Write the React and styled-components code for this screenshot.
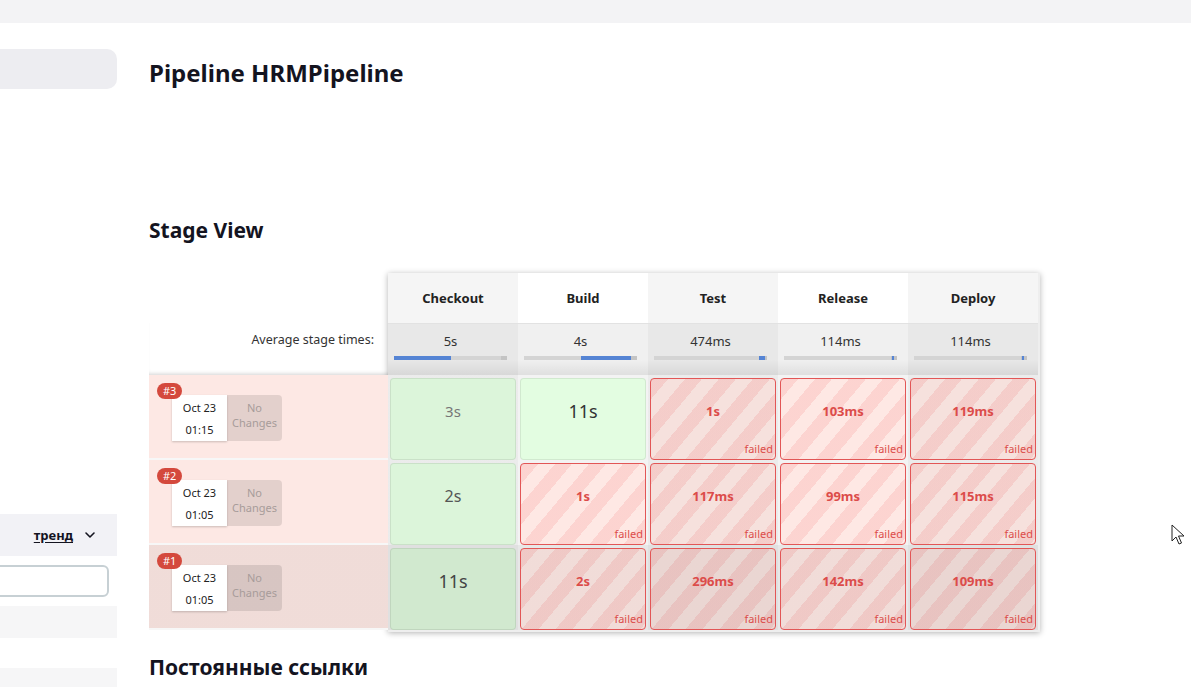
import React from "react";
import styled, { createGlobalStyle } from "styled-components";

const GlobalStyle = createGlobalStyle`
  html, body {
    margin: 0;
    padding: 0;
    background: #fff;
  }
  body {
    font-family: "Noto Sans", "Open Sans", sans-serif;
    color: #14141f;
    overflow: hidden;
  }
`;

// stage durations: header averages and per-build results
const stages = [
    {name: "Checkout", avg: "5s", from: 0, width: 50},
    {name: "Build", avg: "4s", from: 50, width: 45},
    {name: "Test", avg: "474ms", from: 93, width: 5},
    {name: "Release", avg: "114ms", from: 96, width: 1},
    {name: "Deploy", avg: "114ms", from: 96, width: 1},
];

const builds = [
    {
        id: 3, date: "Oct 23", time: "01:15", shade: 0,
        cells: [
            {ok: true, text: "3s", size: 15, color: "#777"},
            {ok: true, text: "11s", size: 18, color: "#333"},
            {text: "1s"}, {text: "103ms"}, {text: "119ms"},
        ],
    },
    {
        id: 2, date: "Oct 23", time: "01:05", shade: 0,
        cells: [
            {ok: true, text: "2s", size: 16, color: "#555"},
            {text: "1s"}, {text: "117ms"}, {text: "99ms"}, {text: "115ms"},
        ],
    },
    {
        id: 1, date: "Oct 23", time: "01:05", shade: 0.05,
        cells: [
            {ok: true, text: "11s", size: 18, color: "#444"},
            {text: "2s"}, {text: "296ms"}, {text: "142ms"}, {text: "109ms"},
        ],
    },
];

const App = () => {
    return (
        <Page>
            <GlobalStyle/>
            <TopBar/>
            <Body>
                <Sidebar>
                    <SidePill/>
                    <TrendBar>
                        <TrendLink>тренд</TrendLink>
                        <svg width="12" height="12" viewBox="0 0 12 12" fill="none">
                            <path d="M2 4l4 4 4-4" stroke="#14141f" strokeWidth="1.6" strokeLinecap="round" strokeLinejoin="round"/>
                        </svg>
                    </TrendBar>
                    <SideInput/>
                    <SideRow $mt={9} $h={32}/>
                    <SideRow $mt={30} $h={40}/>
                </Sidebar>

                <Main>
                    <Title>Pipeline HRMPipeline</Title>
                    <SubTitle $mt={127}>Stage View</SubTitle>

                    <StageView>
                        <LeftCol>
                            <LeftHead/>
                            <AvgLabel>Average stage times:</AvgLabel>
                            {builds.map((b) => (
                                <BuildRow key={b.id} $shade={b.shade}>
                                    <Badge>#{b.id}</Badge>
                                    <BuildBox>
                                        <DateBox>
                                            <span>{b.date}</span>
                                            <span>{b.time}</span>
                                        </DateBox>
                                        <ChangesBox>No<br/>Changes</ChangesBox>
                                    </BuildBox>
                                </BuildRow>
                            ))}
                        </LeftCol>

                        <StageTable>
                            {stages.map((s, i) => (
                                <HeadCell key={s.name} $odd={i % 2 === 0}>{s.name}</HeadCell>
                            ))}
                            {stages.map((s, i) => (
                                <AvgCell key={s.name} $odd={i % 2 === 0}>
                                    <span>{s.avg}</span>
                                    <Bar>
                                        <BarFill style={{left: `${s.from}%`, width: `${s.width}%`}}/>
                                    </Bar>
                                </AvgCell>
                            ))}
                            {builds.map((b) =>
                                b.cells.map((c, i) => (
                                    <CellWrap key={`${b.id}-${i}`} $odd={i % 2 === 0} $shade={b.shade}>
                                        {c.ok ? (
                                            <OkBox $odd={i % 2 === 0} $shade={b.shade}>
                                                <OkText $size={c.size} $color={c.color}>{c.text}</OkText>
                                            </OkBox>
                                        ) : (
                                            <FailBox $odd={i % 2 === 0} $shade={b.shade}>
                                                <FailText>{c.text}</FailText>
                                                <FailTag>failed</FailTag>
                                            </FailBox>
                                        )}
                                    </CellWrap>
                                ))
                            )}
                        </StageTable>
                    </StageView>

                    <SubTitle $mt={21}>Постоянные ссылки</SubTitle>
                </Main>
            </Body>

            <Cursor width="14" height="22" viewBox="0 0 14 22">
                <path d="M1 1v16l4-4 3 7 2.5-1-3-7h5.5z" fill="#fff" stroke="#222" strokeWidth="1"/>
            </Cursor>
        </Page>
    );
};

export default App;

const Page = styled.div`
    position: relative;
    width: 1191px;
    height: 687px;
    overflow: hidden;
`;

const TopBar = styled.div`
    height: 23px;
    background: #f3f3f5;
`;

const Body = styled.div`
    display: flex;
`;

const Sidebar = styled.aside`
    width: 117px;
    flex-shrink: 0;
    display: flex;
    flex-direction: column;
    padding-top: 26px;
    overflow: hidden;
`;

const SidePill = styled.div`
    height: 40px;
    margin-left: -20px;
    width: 137px;
    border-radius: 10px;
    background: #ededf1;
`;

const TrendBar = styled.div`
    margin-top: 425px;
    height: 42px;
    background: #f2f2f6;
    display: flex;
    align-items: center;
    justify-content: flex-end;
    gap: 10px;
    padding-right: 21px;
`;

const TrendLink = styled.span`
    font-size: 13px;
    font-weight: 700;
    text-decoration: underline;
    text-underline-offset: 2px;
    color: #14141f;
    margin-right: 1px;
`;

const SideInput = styled.div`
    margin-top: 9px;
    margin-left: -12px;
    width: 121px;
    height: 32px;
    box-sizing: border-box;
    border: 2px solid #c7d0d4;
    border-radius: 6px;
    background: #fff;
`;

const SideRow = styled.div`
    margin-top: ${(p) => p.$mt}px;
    height: ${(p) => p.$h}px;
    background: #f6f6f7;
`;

const Main = styled.main`
    flex: 1;
    padding-left: 32px;
`;

const Title = styled.h1`
    margin: 34px 0 0 0;
    font-size: 24px;
    line-height: 32px;
    font-weight: 700;
    color: #14141f;
`;

const SubTitle = styled.h2`
    margin: ${(p) => p.$mt}px 0 0 0;
    font-size: 21px;
    line-height: 28px;
    font-weight: 700;
    color: #14141f;
`;

const StageView = styled.div`
    display: flex;
    margin-top: 29px;
    font-family: "Noto Sans", "Open Sans", sans-serif;
`;

const LeftCol = styled.div`
    width: 239px;
    display: flex;
    flex-direction: column;
`;

const LeftHead = styled.div`
    height: 50px;
`;

const AvgLabel = styled.div`
    height: 52px;
    box-sizing: border-box;
    padding: 8px 14px 0 0;
    text-align: right;
    font-size: 12.5px;
    color: #333;
    box-shadow: inset 0 -4px 4px -3px rgba(0, 0, 0, 0.18);
`;

const BuildRow = styled.div`
    position: relative;
    height: 85px;
    box-sizing: border-box;
    border-bottom: 2px solid #f7f7f7;
    background: linear-gradient(rgba(0, 0, 0, ${(p) => p.$shade}), rgba(0, 0, 0, ${(p) => p.$shade})), #fde8e4;
`;

const Badge = styled.span`
    position: absolute;
    left: 8px;
    top: 8px;
    z-index: 1;
    padding: 0 6px;
    height: 16px;
    line-height: 16px;
    border-radius: 8px;
    background: #d4493d;
    color: #fff;
    font-size: 11px;
`;

const BuildBox = styled.div`
    display: flex;
    margin: 20px 0 0 23px;
    width: 110px;
    height: 46px;
`;

const DateBox = styled.div`
    width: 55px;
    display: flex;
    flex-direction: column;
    justify-content: space-between;
    align-items: center;
    background: #fff;
    box-shadow: 0 1px 2px rgba(0, 0, 0, 0.2);
    font-size: 11px;
    line-height: 14px;
    color: #222;
    padding: 6px 0 4px;
    box-sizing: border-box;
`;

const ChangesBox = styled.div`
    width: 55px;
    display: flex;
    align-items: center;
    justify-content: center;
    text-align: center;
    font-size: 11px;
    line-height: 15px;
    padding-bottom: 6px;
    box-sizing: border-box;
    color: #a79c9a;
    background: rgba(0, 0, 0, 0.1);
    border-radius: 0 4px 4px 0;
`;

const StageTable = styled.div`
    display: grid;
    grid-template-columns: repeat(5, 130px);
    grid-template-rows: 50px 52px repeat(3, 85px);
    padding-right: 2px;
    padding-bottom: 2px;
    background: #eee;
    box-shadow: 0 1px 6px rgba(0, 0, 0, 0.3);
`;

const HeadCell = styled.div`
    display: flex;
    align-items: center;
    justify-content: center;
    font-size: 13px;
    font-weight: 700;
    color: #222;
    background: ${(p) => (p.$odd ? "#f5f5f5" : "#fff")};
`;

const AvgCell = styled.div`
    display: flex;
    flex-direction: column;
    align-items: flex-start;
    padding: 8px 0 0 6px;
    box-sizing: border-box;
    font-size: 13px;
    color: #333;
    background: linear-gradient(to bottom, transparent 70%, rgba(0, 0, 0, 0.07)), ${(p) => (p.$odd ? "#e8e8e8" : "#f0f0f0")};
    border-top: 1px solid #e2e2e2;

    span {
        width: 113px;
        text-align: center;
        line-height: 18px;
    }
`;

const Bar = styled.div`
    position: relative;
    margin-top: 6px;
    width: 113px;
    height: 4px;
    background: linear-gradient(to right, #d4d4d4 95%, #c4c4c4 95%);
`;

const BarFill = styled.div`
    position: absolute;
    top: 0;
    bottom: 0;
    min-width: 1px;
    background: #5584d4;
`;

const shadeLayer = (p) => {
    const a = p.$shade + (p.$odd ? 0.03 : 0);
    return `linear-gradient(rgba(0,0,0,${a}), rgba(0,0,0,${a}))`;
};

const CellWrap = styled.div`
    padding: 3px 2px 0;
    box-sizing: border-box;
    background: ${shadeLayer}, #f3f3f3;
`;

const OkBox = styled.div`
    height: 82px;
    box-sizing: border-box;
    border: 1px solid rgba(0, 0, 0, 0.08);
    border-radius: 4px;
    display: flex;
    align-items: center;
    justify-content: center;
    padding-bottom: 16px;
    background: ${shadeLayer}, #e3fde1;
`;

const OkText = styled.span`
    font-size: ${(p) => p.$size}px;
    color: ${(p) => p.$color};
`;

const FailBox = styled.div`
    position: relative;
    height: 82px;
    box-sizing: border-box;
    border: 1px solid #e25656;
    border-radius: 4px;
    display: flex;
    align-items: center;
    justify-content: center;
    padding-bottom: 16px;
    background: ${shadeLayer},
        repeating-linear-gradient(130deg, rgba(245, 120, 120, 0.18) 0 13px, transparent 13px 26px),
        #fee8e4;
`;

const FailText = styled.span`
    font-size: 13px;
    font-weight: 700;
    color: #dc4c4a;
`;

const FailTag = styled.span`
    position: absolute;
    right: 2px;
    bottom: 4px;
    font-size: 11px;
    line-height: 13px;
    color: #dc4c4a;
`;

const Cursor = styled.svg`
    position: absolute;
    left: 1171px;
    top: 524px;
`;
